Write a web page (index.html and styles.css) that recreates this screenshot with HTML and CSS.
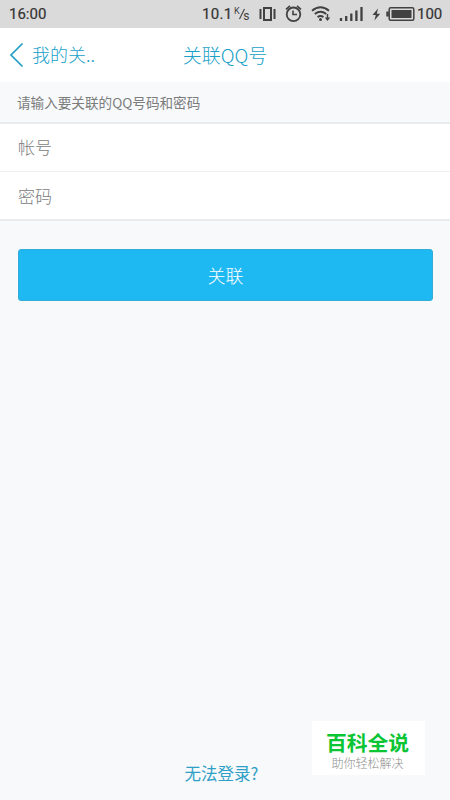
FILE: index.html
```html
<!DOCTYPE html>
<html lang="zh-CN">
<head>
<meta charset="utf-8">
<title>关联QQ号</title>
<link rel="stylesheet" href="styles.css">
</head>
<body>
<div class="screen">
  <div class="status">
    <span class="time">16:00</span>
    <span class="speed">10.1</span>
    <svg class="unit" width="17" height="16" viewBox="0 0 17 16"><text x="0" y="8" font-size="9">K</text><path d="M5.5 13 10.5 3" fill="none" stroke="#414141" stroke-width="1.1"/><text x="9.3" y="14" font-size="12">s</text></svg>
    <svg class="icons" width="184" height="28" viewBox="256 0 184 28" fill="none" stroke="#414141" stroke-width="2">
      <path d="M260.5 9v10M274.5 9v10"/><rect x="264" y="8" width="7" height="12"/>
      <circle cx="293.5" cy="14.3" r="6.8" stroke-width="1.8"/><path d="M293 10.5v4h4M286 9.3l4-3.4M301 9.3l-4-3.4" stroke-width="1.6"/>
      <path d="M312 10.7q8.5-7 17 0M314.8 14q5.7-4.5 11.4 0M317.6 17.1q2.9-2.2 5.8 0"/><circle cx="320.5" cy="19.5" r="1.5" fill="#414141" stroke="none"/><path d="M327.5 14v5" stroke-width="1.4"/><path d="M324.8 17.5h5.4l-2.7 3.5z" fill="#414141" stroke="none"/>
      <path d="M341 21v-3M346.2 21v-5M351.3 21v-7.5M356.4 21v-10.5M361.5 21V7" stroke-width="2.3"/>
      <path d="M378 8.5 372.5 15h3.3l-1.4 5.5 5.8-6.8h-3.4z" fill="#414141" stroke="none"/>
      <rect x="389.2" y="7.7" width="24.6" height="12.6" rx="1.5" stroke-width="1.5"/><path d="M391.5 10h20v8h-20zM386.3 11.5h2.5v5h-2.5z" fill="#414141" stroke="none"/>
    </svg>
    <span class="percent">100</span>
  </div>
  <header class="nav">
    <a class="back"><svg width="15" height="26" viewBox="0 0 15 26"><path d="M13.5 1.5 2 13l11.5 11.5" fill="none" stroke="#249fc4" stroke-width="1.7"/></svg><span>我的关..</span></a>
    <h1>关联QQ号</h1>
  </header>
  <p class="hint">请输入要关联的QQ号码和密码</p>
  <div class="form">
    <div class="field">帐号</div>
    <div class="field">密码</div>
  </div>
  <div class="submit">关联</div>
  <a class="help">无法登录?</a>
  <div class="mark"><strong>百科全说</strong><span>助你轻松解决</span></div>
</div>
</body>
</html>
```
FILE: styles.css
```css
* { box-sizing: border-box; }
body {
  margin: 0;
  font-family: "Noto Sans CJK SC", sans-serif;
  font-weight: 300;
}
.screen {
  position: relative;
  display: flex;
  flex-direction: column;
  width: 450px;
  height: 800px;
  background: #f7f9fb;
  overflow: hidden;
}
.status {
  display: flex;
  align-items: center;
  height: 28px;
  padding-left: 9px;
  background: #dadada;
  color: #333;
  font: 400 15px/28px Roboto, sans-serif;
  -webkit-text-stroke: .2px #333;
}
.time { width: 193px; }
.speed { width: 32px; letter-spacing: .3px; }
.unit { width: 17px; fill: #414141; }
.icons { margin-left: 5px; flex: none; }
.percent { margin-left: -23px; }
.nav {
  display: grid;
  grid-template-columns: 1fr auto 1fr;
  align-items: center;
  height: 54px;
  background: #fff;
  color: #209fc9;
}
.back {
  display: flex;
  align-items: center;
  gap: 8px;
  padding-left: 9px;
  font-size: 18px;
  line-height: 26px;
}
.back span {
  padding-bottom: 2px;
}
.nav h1 {
  margin: 0;
  font-size: 19px;
  font-weight: 300;
  line-height: 26px;
}
.hint {
  height: 42px;
  margin: 0;
  padding-left: 17px;
  border-bottom: 2px solid #e9ecee;
  color: #7c7c7c;
  font-size: 13.6px;
  font-weight: 400;
  line-height: 41px;
}
.form {
  height: 97px;
  background: #fff;
  border-bottom: 2px solid #e9ecee;
}
.field {
  height: 47px;
  padding-left: 18px;
  color: #7c7c7c;
  font-size: 17px;
  line-height: 46px;
}
.field + .field {
  height: 48px;
  border-top: 1px solid #eceeef;
  line-height: 48px;
}
.submit {
  height: 52px;
  margin: 28px 17px 0 18px;
  border: 1px solid #35acd7;
  border-radius: 3px;
  background: #1eb9f2;
  color: #fff;
  font-size: 18px;
  line-height: 50px;
  text-align: center;
}
.help {
  margin: auto auto 15px 184.5px;
  color: #2f9fc6;
  font-size: 16.5px;
  font-weight: 400;
  line-height: 24px;
}
.mark {
  position: absolute;
  left: 312px;
  top: 721px;
  display: flex;
  flex-direction: column;
  align-items: center;
  width: 113px;
  height: 54px;
  padding-top: 10px;
  background: #fff;
}
.mark strong {
  color: #0bc535;
  font-size: 20.8px;
  font-weight: 700;
  line-height: 22px;
  margin: 0 0 3px -2px;
}
.mark span {
  color: #8e8e8e;
  font-size: 12px;
  line-height: 14px;
  margin-left: -2px;
}
```
